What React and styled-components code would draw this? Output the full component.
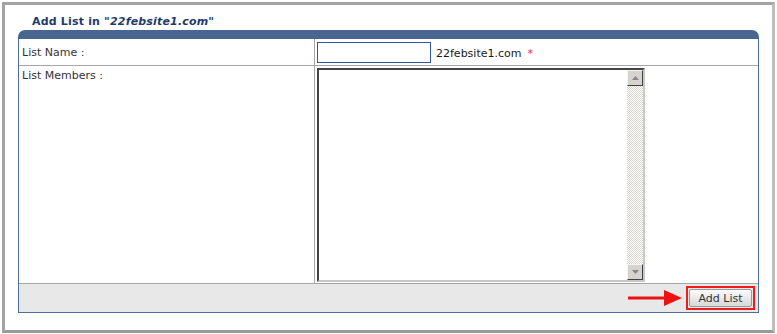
import React from 'react';
import styled, { createGlobalStyle } from 'styled-components';

const GlobalStyle = createGlobalStyle`
  html, body {
    margin: 0;
    padding: 0;
    background: #ffffff;
  }
  body {
    font-family: 'DejaVu Sans', Verdana, sans-serif;
  }
`;

const Frame = styled.div`
  box-sizing: border-box;
  margin: 2px 0 0 2px;
  width: 773px;
  height: 331px;
  border: 3px solid #a3a3a3;
  border-right-color: #bdbdbd;
  border-bottom-color: #9a9a9a;
  background: #fff;
`;

const Title = styled.h1`
  margin: 0;
  height: 25px;
  padding-left: 27px;
  display: flex;
  align-items: flex-end;
  font-size: 11px;
  font-weight: bold;
  color: #1f3b6b;
  line-height: 14px;
  letter-spacing: 0.18px;
  padding-bottom: 1px;
  box-sizing: border-box;

  em {
    margin-left: 4px;
  }
`;

const Panel = styled.div`
  margin-left: 13px;
  width: 741px;
`;

const PanelHead = styled.div`
  height: 9px;
  background: #48668f;
  border-radius: 7px 7px 0 0;
`;

const Table = styled.div`
  border: 1px solid #4f6ea0;
  border-top: none;
  display: grid;
  grid-template-columns: 296px 1fr;
  grid-template-rows: 27px 218px 28px;
`;

const LabelCell = styled.div`
  border-bottom: 1px solid #a6a6a6;
  border-right: 1px solid #a6a6a6;
  padding: ${({ top }) => (top ? '3px' : '0')} 0 0 3px;
  display: flex;
  align-items: ${({ top }) => (top ? 'flex-start' : 'center')};
  font-size: 11px;
  color: #3a2f3a;
`;

const FieldCell = styled.div`
  border-bottom: 1px solid #a6a6a6;
  padding: ${({ top }) => (top ? '2px 0 0 2px' : '0 0 0 2px')};
  display: flex;
  align-items: ${({ top }) => (top ? 'flex-start' : 'center')};
`;

const TextInput = styled.input`
  box-sizing: border-box;
  width: 114px;
  height: 21px;
  border: 1px solid #3454a0;
  margin: 0 5px 0 0;
  padding: 0;
`;

const Domain = styled.span`
  font-size: 11px;
  color: #1a1a1a;
  padding-top: 3px;
`;

const Required = styled.span`
  color: #e03030;
  font-size: 11px;
  margin-left: 6px;
  padding-top: 2px;
`;

const AreaBox = styled.div`
  box-sizing: border-box;
  width: 328px;
  height: 214px;
  border: 2px solid;
  border-color: #444 #c8c8c8 #c8c8c8 #444;
  display: flex;
`;

const Area = styled.textarea`
  flex: 1;
  border: none;
  outline: none;
  resize: none;
  padding: 0;
  margin: 0;
  overflow: hidden;
`;

const ScrollBar = styled.div`
  width: 16px;
  display: flex;
  flex-direction: column;
  background-color: #ffffff;
  background-image: repeating-conic-gradient(#d8d6d0 0 25%, #ffffff 0 50%);
  background-size: 2px 2px;
`;

const ScrollButton = styled.div`
  box-sizing: border-box;
  width: 16px;
  height: 16px;
  background: #d6d3ce;
  border: 1px solid;
  border-color: #f4f4f4 #404040 #404040 #f4f4f4;
  display: flex;
  align-items: center;
  justify-content: center;
`;

const Track = styled.div`
  flex: 1;
`;

const Footer = styled.div`
  grid-column: 1 / span 2;
  background: #e8e8e8;
  display: flex;
  justify-content: flex-end;
  align-items: center;
  gap: 4px;
  padding-right: 3px;
`;

const Arrow = styled.svg`
  display: block;
`;

const ButtonWrap = styled.div`
  box-sizing: border-box;
  border: 2px solid #ee1c1c;
  height: 24px;
  width: 69px;
  padding: 1px;
  display: flex;
`;

const Button = styled.button`
  flex: 1;
  border: 1px solid #9a9a9a;
  border-radius: 2px;
  background: linear-gradient(#fbfbfb, #e6e6e6 60%, #d8d8d8);
  font-family: 'DejaVu Sans', Verdana, sans-serif;
  font-size: 11px;
  color: #333;
  padding: 0;
`;

const Tri = ({ down }) => (
  <svg width="7" height="4" viewBox="0 0 7 4">
    <polygon points={down ? '0,0 7,0 3.5,4' : '0,4 7,4 3.5,0'} fill="#888" />
  </svg>
);

const App = () => (
  <>
    <GlobalStyle />
    <Frame>
      <Title>
        Add List in <em>"22febsite1.com"</em>
      </Title>
      <Panel>
        <PanelHead />
        <Table>
          <LabelCell>List Name :</LabelCell>
          <FieldCell>
            <TextInput type="text" />
            <Domain>22febsite1.com</Domain>
            <Required>*</Required>
          </FieldCell>
          <LabelCell top>List Members :</LabelCell>
          <FieldCell top>
            <AreaBox>
              <Area />
              <ScrollBar>
                <ScrollButton>
                  <Tri />
                </ScrollButton>
                <Track />
                <ScrollButton>
                  <Tri down />
                </ScrollButton>
              </ScrollBar>
            </AreaBox>
          </FieldCell>
          <Footer>
            <Arrow width="54" height="16" viewBox="0 0 54 16">
              <rect x="0" y="6.5" width="38" height="3" fill="#ee1111" />
              <polygon points="36,0 54,8 36,16" fill="#ee1111" />
            </Arrow>
            <ButtonWrap>
              <Button>Add List</Button>
            </ButtonWrap>
          </Footer>
        </Table>
      </Panel>
    </Frame>
  </>
);

export default App;
